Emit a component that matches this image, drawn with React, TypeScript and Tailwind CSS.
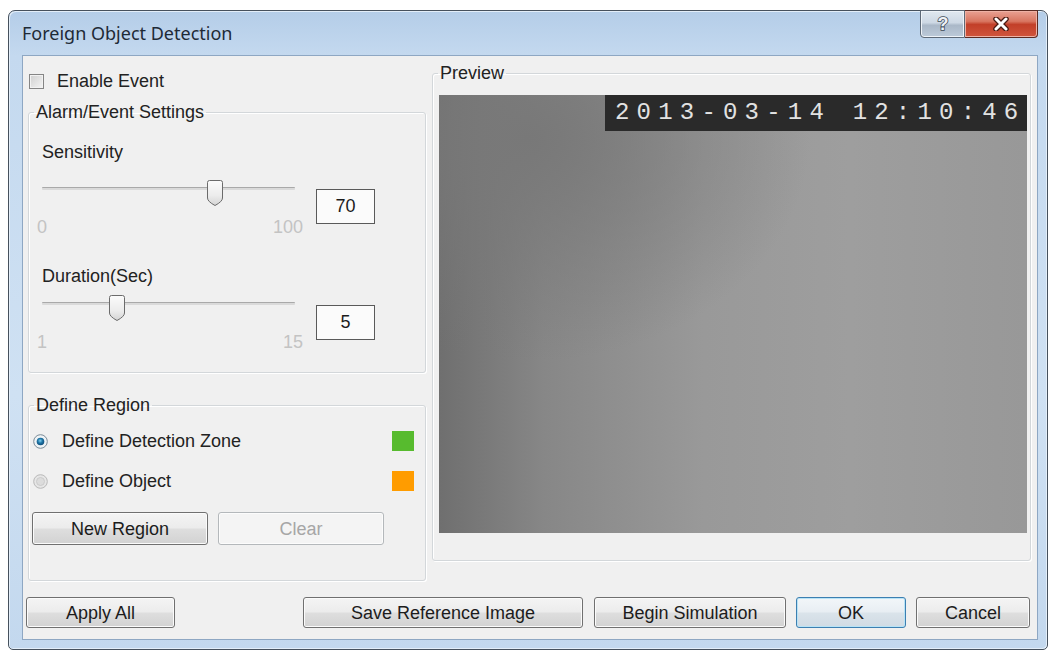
import type { ReactNode } from 'react';

const ui = "font-['Liberation_Sans',Arial,sans-serif]";

function Button({
  children,
  className = '',
  disabled = false,
  focused = false,
}: {
  children: ReactNode;
  className?: string;
  disabled?: boolean;
  focused?: boolean;
}) {
  let look =
    'border-[#707070] text-[#1c1c1c] bg-[linear-gradient(180deg,#f4f4f4_0%,#ececec_48%,#dedede_52%,#d2d2d2_100%)] shadow-[inset_0_0_0_1px_#fbfbfb]';
  if (disabled) look = 'border-[#b4b8bb] text-[#a6a6a6] bg-[#f4f4f4] shadow-[inset_0_0_0_1px_#fcfcfc]';
  if (focused)
    look =
      'border-[#3c7fb1] text-[#1c1c1c] bg-[linear-gradient(180deg,#f2f6f9_0%,#e8eef3_48%,#dae3ea_52%,#d0dbe4_100%)] shadow-[inset_0_0_0_1px_#b8e3f6]';
  return (
    <button
      disabled={disabled}
      className={`flex items-center justify-center rounded-[3px] border text-[18px] leading-none ${ui} ${look} ${className}`}
    >
      {children}
    </button>
  );
}

function Slider({ value, min, max }: { value: number; min: number; max: number }) {
  const left = ((value - min) / (max - min)) * 236;
  return (
    <div className="flex flex-col w-[266px]">
      <div className="relative ml-[5px] w-[253px] h-[26px]">
        <div className="absolute left-0 right-0 top-[7px] h-[3px] rounded-[1px] bg-[#dadada] border-t border-[#a9a9a9]" />
        <svg className="absolute top-0" style={{ left }} width="16" height="26" viewBox="0 0 16 26">
          <defs>
            <linearGradient id={`thumb${min}`} x1="0" y1="0" x2="0" y2="1">
              <stop offset="0" stopColor="#fbfbfb" />
              <stop offset="0.6" stopColor="#ececec" />
              <stop offset="1" stopColor="#d4d4d4" />
            </linearGradient>
          </defs>
          <path
            d="M2.5 0.5 H13.5 Q15.5 0.5 15.5 2.5 V18 Q15.5 21.5 8 25.5 Q0.5 21.5 0.5 18 V2.5 Q0.5 0.5 2.5 0.5 Z"
            fill={`url(#thumb${min})`}
            stroke="#6b6b6b"
          />
        </svg>
      </div>
      <div className={`mt-[11px] flex justify-between text-[18px] leading-[20px] text-[#c3c3c3] ${ui}`}>
        <span>{min}</span>
        <span>{max}</span>
      </div>
    </div>
  );
}

function ValueBox({ value, top }: { value: number; top: string }) {
  return (
    <div
      className={`ml-[13px] ${top} w-[59px] h-[35px] flex items-center justify-center border border-[#5a5a5a] bg-[#fbfbfb] text-[18px] text-[#1c1c1c] ${ui}`}
    >
      {value}
    </div>
  );
}

function Radio({ checked }: { checked: boolean }) {
  return (
    <svg width="15" height="15" viewBox="0 0 15 15">
      <defs>
        <radialGradient id="rdot" cx="0.45" cy="0.4" r="0.6">
          <stop offset="0" stopColor="#7fd0f0" />
          <stop offset="0.5" stopColor="#1f77a8" />
          <stop offset="1" stopColor="#0f4c78" />
        </radialGradient>
      </defs>
      <circle cx="7.5" cy="7.5" r="6.8" fill={checked ? '#eef3f6' : '#e6e6e6'} stroke={checked ? '#7a8a96' : '#b8b8b8'} />
      {checked ? (
        <circle cx="7.5" cy="7.5" r="3.8" fill="url(#rdot)" />
      ) : (
        <circle cx="7.5" cy="7.5" r="4" fill="#dcdcdc" stroke="#cbcbcb" />
      )}
    </svg>
  );
}

function Group({ title, className, children }: { title: string; className: string; children: ReactNode }) {
  return (
    <fieldset className={`border border-[#d3d7da] rounded-[3px] shadow-[inset_1px_1px_0_#fff,1px_1px_0_#fff] ${className}`}>
      <legend className={`ml-[5px] px-[2px] text-[18px] leading-[20px] text-[#222] ${ui}`}>{title}</legend>
      {children}
    </fieldset>
  );
}

export default function App() {
  return (
    <div className="w-[1051px] h-[654px] bg-white pl-[8px] pt-[10px] overflow-hidden">
      <div className="w-[1040px] h-[640px] flex flex-col rounded-t-[7px] rounded-b-[5px] border border-[#46515d] bg-[linear-gradient(180deg,#b4cde8_0%,#c4d9ef_7%,#cfe1f3_60%,#c3d8ee_100%)] shadow-[inset_1px_1px_0_#e3eef9,inset_-1px_-1px_0_#e3eef9]">
        {/* title bar */}
        <div className="h-[44px] flex items-start">
          <div className="h-full flex items-center pl-[13px] text-[18px] text-[#1e2a36] font-['Noto_Sans','Open_Sans',sans-serif]">
            Foreign Object Detection
          </div>
          <div className="ml-auto mr-[9px] flex -mt-[1px]">
            <div className="w-[45px] h-[28px] flex items-center justify-center rounded-bl-[4px] border border-[#5d6977] bg-[linear-gradient(180deg,#e0e8f0_0%,#cdd8e4_45%,#aab8c8_55%,#bccad9_100%)] shadow-[inset_0_0_0_1px_#eef3f8]">
              <svg width="16" height="20" viewBox="0 0 16 20">
                <text
                  x="8"
                  y="16"
                  textAnchor="middle"
                  fontSize="18"
                  fontWeight="700"
                  fontFamily="Liberation Sans, Arial, sans-serif"
                  fill="#eef2f6"
                  stroke="#3e4956"
                  strokeWidth="1.6"
                  paintOrder="stroke"
                >
                  ?
                </text>
              </svg>
            </div>
            <div className="w-[73px] h-[28px] flex items-center justify-center rounded-br-[4px] border border-l-0 border-[#5b2a22] bg-[linear-gradient(180deg,#e9a193_0%,#d87560_40%,#c23f29_52%,#d0553c_100%)] shadow-[inset_0_0_0_1px_#eeb1a4]">
              <svg width="16" height="14" viewBox="0 0 16 14">
                <path d="M3 2 L13 12 M13 2 L3 12" stroke="#4a1a12" strokeWidth="5.5" strokeLinecap="round" />
                <path d="M3 2 L13 12 M13 2 L3 12" stroke="#ffffff" strokeWidth="3" strokeLinecap="round" />
              </svg>
            </div>
          </div>
        </div>

        {/* client area */}
        <div className="ml-[13px] mr-[9px] h-[585px] flex flex-col border border-[#8ea7c3] bg-[#f0f0f0]">
          <div className="flex items-start pt-[7px] pl-[5px]">
            {/* left column */}
            <div className="w-[398px] pt-[3px] flex flex-col">
              <div className="h-[30px] flex items-center">
                <div className="ml-[1px] w-[15px] h-[15px] border border-[#858585] bg-[linear-gradient(135deg,#cfcfcf_0%,#e6e6e6_60%,#f4f4f4_100%)] shadow-[inset_0_0_0_1px_#f2f2f2]" />
                <span className={`ml-[13px] text-[18px] text-[#222] ${ui}`}>Enable Event</span>
              </div>

              <Group title="Alarm/Event Settings" className="mt-[6px] h-[271px]">
                <div className="pl-[13px] mt-[20px]">
                  <div className={`text-[18px] leading-[20px] text-[#222] ${ui}`}>Sensitivity</div>
                </div>
                <div className="flex items-start pl-[8px] mt-[18px]">
                  <Slider value={70} min={0} max={100} />
                  <ValueBox value={70} top="mt-[9px]" />
                </div>
                <div className="pl-[13px] mt-[29px]">
                  <div className={`text-[18px] leading-[20px] text-[#222] ${ui}`}>Duration(Sec)</div>
                </div>
                <div className="flex items-start pl-[8px] mt-[9px]">
                  <Slider value={5} min={1} max={15} />
                  <ValueBox value={5} top="mt-[10px]" />
                </div>
              </Group>

              <Group title="Define Region" className="mt-[22px] h-[186px]">
                <div className="mt-[14px] h-[24px] flex items-center pl-[4px] pr-[11px]">
                  <Radio checked />
                  <span className={`ml-[14px] text-[18px] text-[#222] ${ui}`}>Define Detection Zone</span>
                  <div className="ml-auto w-[22px] h-[20px] bg-[#57bb2e]" />
                </div>
                <div className="mt-[16px] h-[24px] flex items-center pl-[4px] pr-[11px]">
                  <Radio checked={false} />
                  <span className={`ml-[14px] text-[18px] text-[#222] ${ui}`}>Define Object</span>
                  <div className="ml-auto w-[22px] h-[20px] bg-[#ff9c00]" />
                </div>
                <div className="mt-[19px] flex gap-[10px] pl-[3px]">
                  <Button className="w-[176px] h-[33px]">New Region</Button>
                  <Button className="w-[166px] h-[33px]" disabled>
                    Clear
                  </Button>
                </div>
              </Group>
            </div>

            {/* preview */}
            <Group title="Preview" className="ml-[6px] w-[599px] h-[498px]">
              <div className="ml-[6px] mt-[12px] w-[588px] h-[438px] flex justify-end items-start bg-[radial-gradient(ellipse_at_15%_10%,#787878_0%,transparent_40%),linear-gradient(90deg,#6f6f6f_0%,#878787_18%,#999999_45%,#9e9e9e_70%,#989898_100%)]">
                <div className="w-[422px] h-[36px] flex items-center pl-[10px] bg-[#2a2a2a] text-[24px] tracking-[7.2px] text-[#e2e2e2] font-['Liberation_Mono','DejaVu_Sans_Mono',monospace] whitespace-pre">
                  2013-03-14 12:10:46
                </div>
              </div>
            </Group>
          </div>

          {/* bottom buttons */}
          <div className="mt-auto mb-[11px] pl-[3px] pr-[7px] flex items-center">
            <Button className="w-[149px] h-[31px]">Apply All</Button>
            <Button className="ml-auto w-[280px] h-[31px]">Save Reference Image</Button>
            <Button className="ml-[11px] w-[192px] h-[31px]">Begin Simulation</Button>
            <Button className="ml-[10px] w-[110px] h-[31px]" focused>
              OK
            </Button>
            <Button className="ml-[10px] w-[114px] h-[31px]">Cancel</Button>
          </div>
        </div>
      </div>
    </div>
  );
}
